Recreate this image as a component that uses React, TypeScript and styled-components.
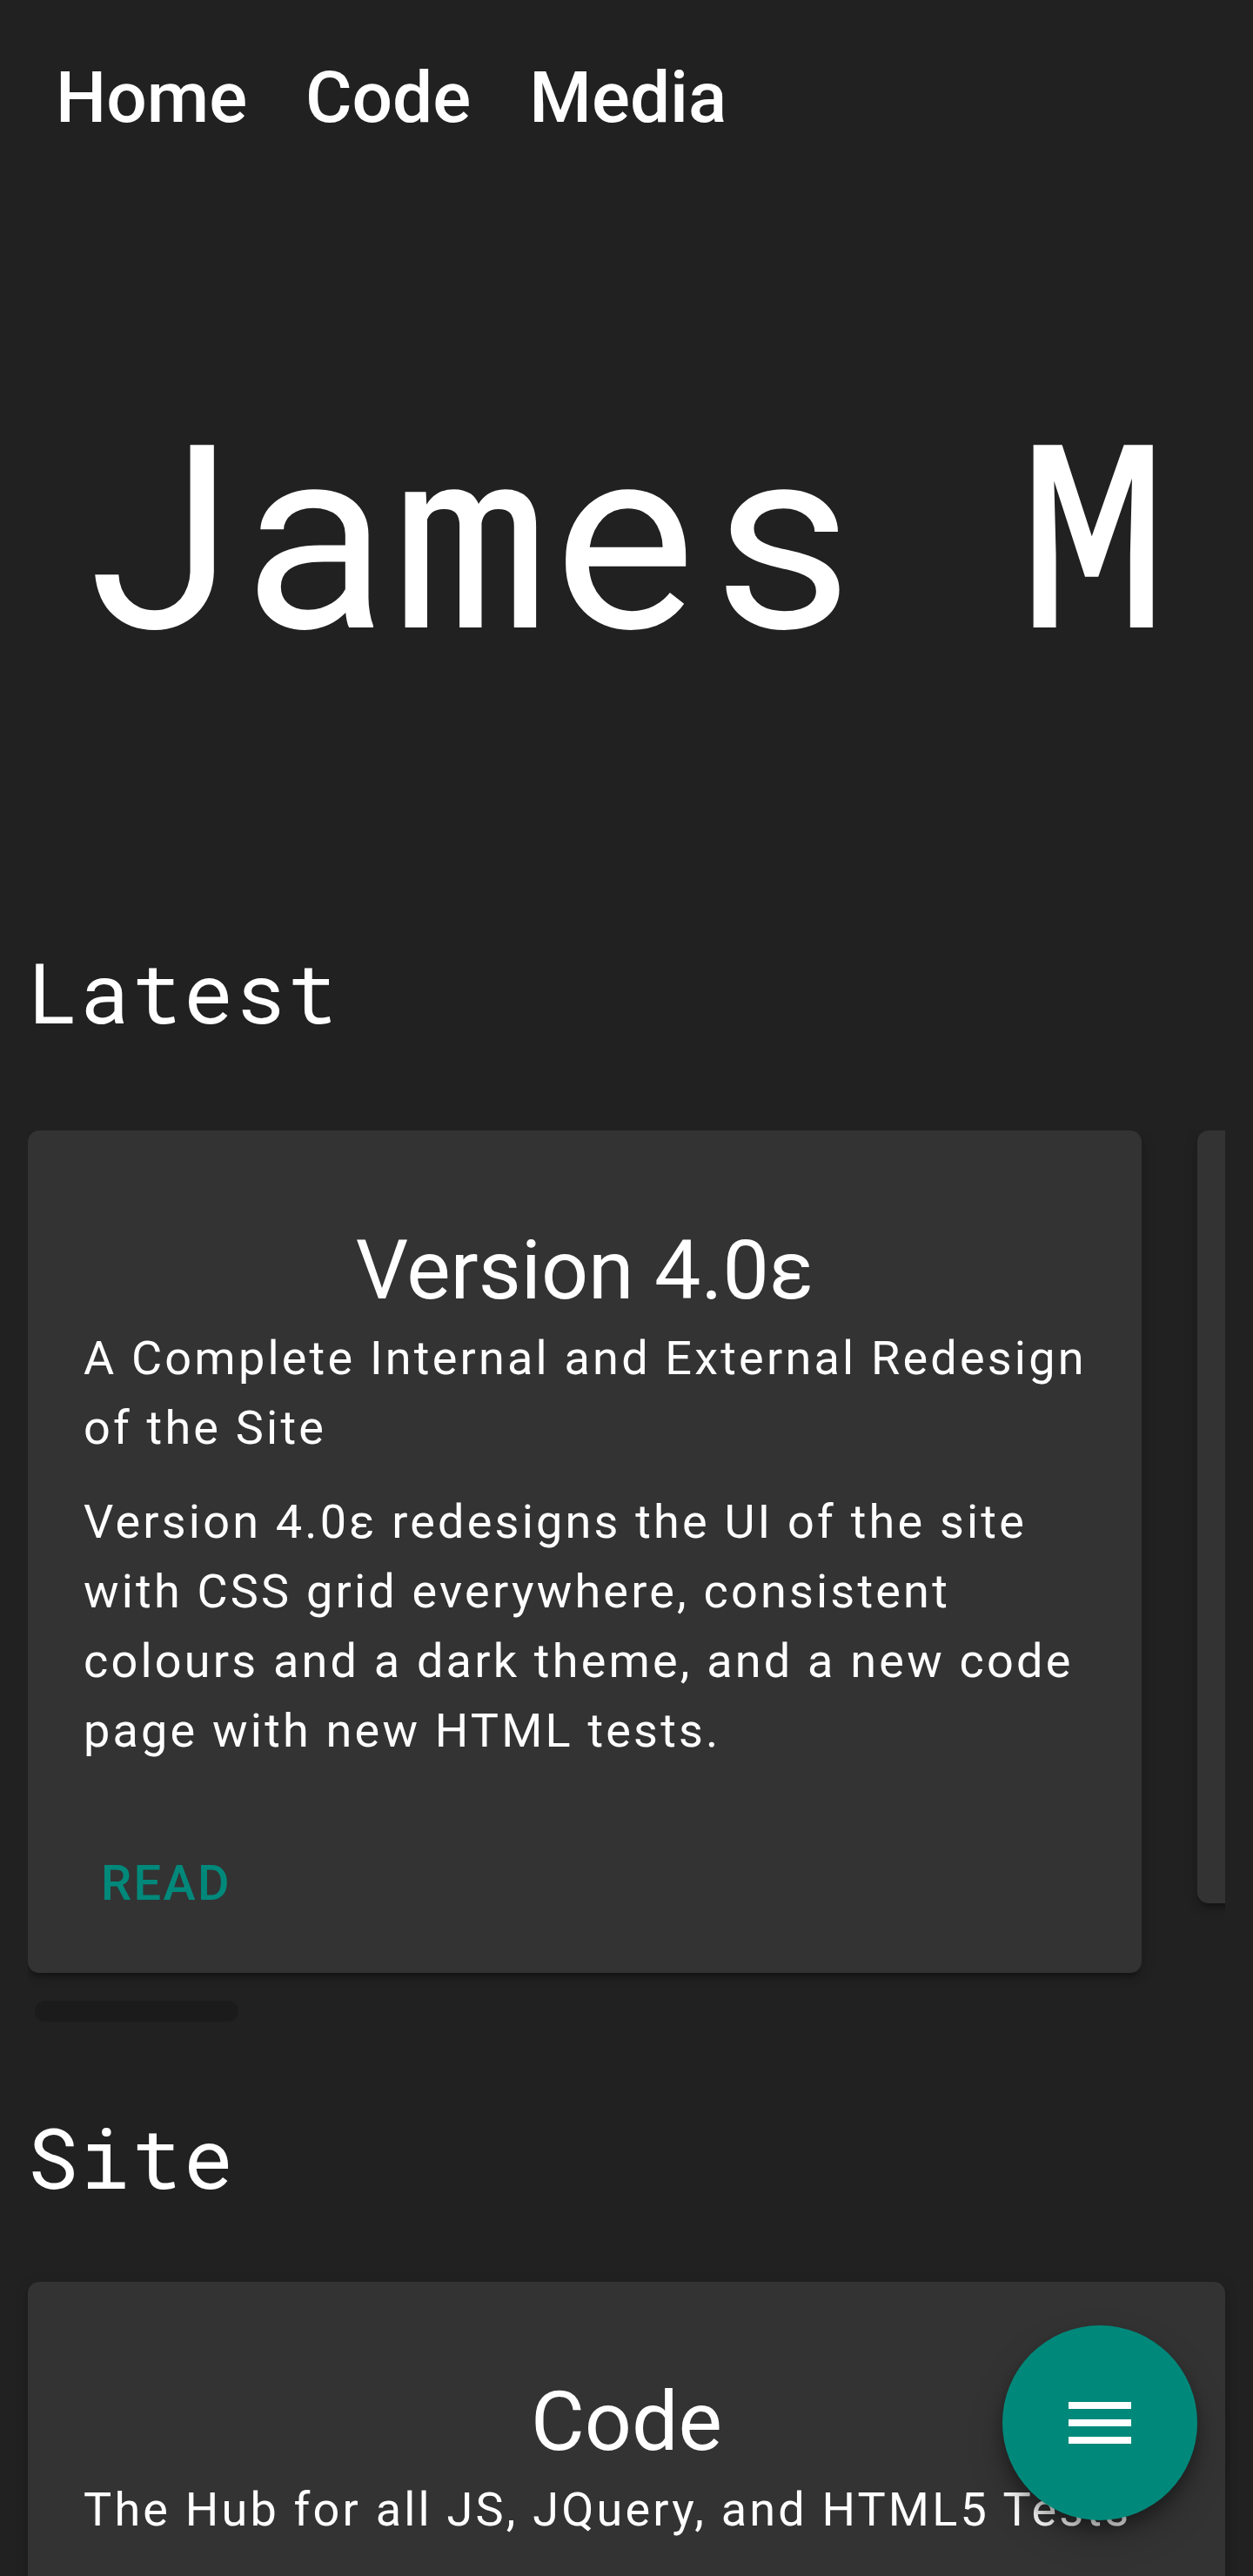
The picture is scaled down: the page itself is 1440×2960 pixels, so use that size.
import React from "react";
import styled, { createGlobalStyle } from "styled-components";

const GlobalStyle = createGlobalStyle`
  html, body {
    margin: 0;
    padding: 0;
    background: #212121;
  }
  body {
    font-family: Roboto, "Noto Sans", Arial, sans-serif;
    color: #ffffff;
  }
  *, *::before, *::after {
    box-sizing: border-box;
  }
`;

const CARD_WIDTH = 1280;
const CARD_GAP = 64;
const VIEW_WIDTH = 1376;
const BAR_INSET = 8;

const Page = styled.div`
  height: 100vh;
  overflow: hidden;
  background: #212121;
  padding: 0 32px;
`;

const Nav = styled.nav`
  display: flex;
  align-items: center;
  padding-top: 64px;
`;

const NavLink = styled.a`
  font: 500 82px/96px Roboto, "Noto Sans", sans-serif;
  color: #ffffff;
  text-decoration: none;
  padding: 0 35px 0 32px;
`;

const Hero = styled.h1`
  margin: 277px 0 0;
  font: 400 295px/340px "Roboto Mono", "DejaVu Sans Mono", monospace;
  letter-spacing: 1.5px;
  text-align: center;
  white-space: nowrap;
  color: #ffffff;
`;

const SectionTitle = styled.h2<{ $top: number }>`
  margin: ${(p) => p.$top}px 0 0;
  font: 400 96px/112px "Roboto Mono", "DejaVu Sans Mono", monospace;
  letter-spacing: 2px;
  color: #ffffff;
`;

const Carousel = styled.div`
  margin-top: 104px;
  overflow-x: auto;
  overflow-y: hidden;
  padding-bottom: 24px;
  scrollbar-width: none;
  &::-webkit-scrollbar {
    display: none;
  }
`;

const Track = styled.div`
  display: flex;
  align-items: flex-start;
  gap: ${CARD_GAP}px;
  width: max-content;
`;

const ScrollBar = styled.div`
  height: 40px;
  padding: ${BAR_INSET}px;
`;

const ScrollThumb = styled.div`
  height: 24px;
  border-radius: 12px;
  background: #1b1b1b;
`;

const Grid = styled.div`
  margin-top: 88px;
  display: grid;
  grid-template-columns: 1fr;
  gap: 64px;
`;

const Card = styled.article<{ $width?: number }>`
  flex: none;
  width: ${(p) => (p.$width ? `${p.$width}px` : "100%")};
  background: #333333;
  border-radius: 13px;
  box-shadow: 0 7px 3px -4px rgba(0, 0, 0, 0.2), 0 7px 7px 0 rgba(0, 0, 0, 0.14),
    0 3px 17px 0 rgba(0, 0, 0, 0.12);
`;

const CardBody = styled.div`
  padding: 105px 64px 0;
`;

const CardTitle = styled.h3`
  margin: 0;
  font: 400 95px/111px Roboto, "Noto Sans", sans-serif;
  text-align: center;
  color: #ffffff;
`;

const CardSubtitle = styled.h4`
  margin: 6px -32px 0 0;
  font: 400 54px/80px Roboto, "Noto Sans", sans-serif;
  letter-spacing: 3.2px;
  color: #ffffff;
`;

const CardText = styled.p`
  margin: 28px -32px 0 0;
  font: 400 54px/80px Roboto, "Noto Sans", sans-serif;
  letter-spacing: 3.2px;
  color: #ffffff;
`;

const CardActions = styled.div`
  display: flex;
  padding: 75px 0 43px 62px;
`;

const TextButton = styled.button`
  display: inline-flex;
  align-items: center;
  height: 120px;
  padding: 0 22px;
  border: 0;
  background: none;
  font: 500 56px/1 Roboto, "Noto Sans", sans-serif;
  letter-spacing: 2.3px;
  text-transform: uppercase;
  color: #00897b;
  cursor: pointer;
`;

const Fab = styled.button`
  position: fixed;
  right: 64px;
  bottom: 64px;
  width: 224px;
  height: 224px;
  border: 0;
  border-radius: 50%;
  background: #00897b;
  display: grid;
  place-items: center;
  box-shadow: 0 10px 17px rgba(0, 0, 0, 0.3), 0 20px 40px rgba(0, 0, 0, 0.22);
  cursor: pointer;
`;

const MenuIcon = () => (
  <svg width="96" height="96" viewBox="0 0 24 24" aria-hidden="true">
    <path fill="#ffffff" d="M3 18h18v-2H3v2zm0-5h18v-2H3v2zm0-7v2h18V6H3z" />
  </svg>
);

type Post = { title: string; subtitle: string; body: string };

const latest: Post[] = [
  {
    title: "Version 4.0ε",
    subtitle: "A Complete Internal and External Redesign of the Site",
    body:
      "Version 4.0ε redesigns the UI of the site with CSS grid everywhere, consistent colours and a dark theme, and a new code page with new HTML tests.",
  },
  {
    title: "Version 3.2",
    subtitle: "A Complete Internal and External Redesign of the Site",
    body: "Version 3.2 moves the site to material components, adds a new build system and cleans up old pages.",
  },
  {
    title: "Version 3.1",
    subtitle: "New Media Page",
    body: "A new media page with galleries, videos and music from around the site.",
  },
  {
    title: "Version 3.0",
    subtitle: "The Site Goes Responsive",
    body: "Every page now works on phones, tablets and desktops alike.",
  },
  {
    title: "Version 2.0",
    subtitle: "A Fresh Start",
    body: "The second version of the site with a new look and new pages.",
  },
  {
    title: "Version 1.0",
    subtitle: "The First Site",
    body: "Where it all began: a single page and a few links.",
  },
];

const site: Post[] = [
  {
    title: "Code",
    subtitle: "The Hub for all JS, JQuery, and HTML5 Tests",
    body: "Experiments, demos and tests built over the years, all in one place.",
  },
  {
    title: "Media",
    subtitle: "Photos, Videos and Music",
    body: "Everything visual and audible from the site.",
  },
];

const PostCard = ({ post, width, action }: { post: Post; width?: number; action: string }) => (
  <Card $width={width}>
    <CardBody>
      <CardTitle>{post.title}</CardTitle>
      <CardSubtitle>{post.subtitle}</CardSubtitle>
      <CardText>{post.body}</CardText>
    </CardBody>
    <CardActions>
      <TextButton>{action}</TextButton>
    </CardActions>
  </Card>
);

export default function App() {
  const contentWidth = latest.length * CARD_WIDTH + (latest.length - 1) * CARD_GAP;
  const thumbWidth = ((VIEW_WIDTH - BAR_INSET * 2) * VIEW_WIDTH) / contentWidth;

  return (
    <>
      <GlobalStyle />
      <Page>
        <Nav>
          <NavLink href="#">Home</NavLink>
          <NavLink href="#">Code</NavLink>
          <NavLink href="#">Media</NavLink>
        </Nav>
        <Hero>James M</Hero>
        <SectionTitle $top={306}>Latest</SectionTitle>
        <Carousel>
          <Track>
            {latest.map((p) => (
              <PostCard key={p.title} post={p} width={CARD_WIDTH} action="Read" />
            ))}
          </Track>
        </Carousel>
        <ScrollBar>
          <ScrollThumb style={{ width: thumbWidth }} />
        </ScrollBar>
        <SectionTitle $top={91}>Site</SectionTitle>
        <Grid>
          {site.map((p) => (
            <PostCard key={p.title} post={p} action="Open" />
          ))}
        </Grid>
      </Page>
      <Fab aria-label="Menu">
        <MenuIcon />
      </Fab>
    </>
  );
}
